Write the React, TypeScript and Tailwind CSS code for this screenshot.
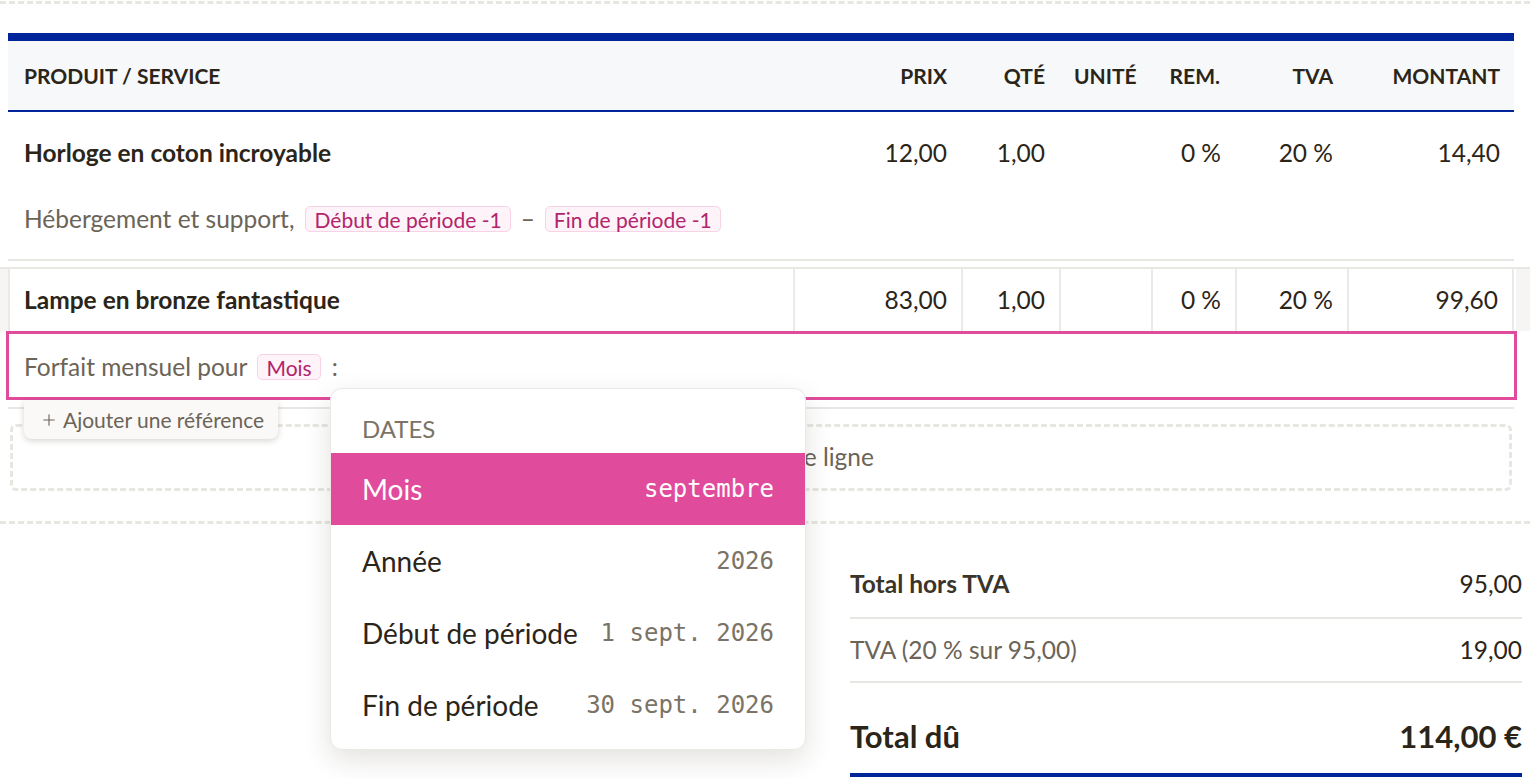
import { Plus } from "lucide-react";

interface Line {
    name: string;
    price: string;
    qty: string;
    unit: string;
    discount: string;
    vat: string;
    amount: string;
}

const lines: Line[] = [
    { name: "Horloge en coton incroyable", price: "12,00", qty: "1,00", unit: "", discount: "0 %", vat: "20 %", amount: "14,40" },
    { name: "Lampe en bronze fantastique", price: "83,00", qty: "1,00", unit: "", discount: "0 %", vat: "20 %", amount: "99,60" },
];

const dateOptions = [
    { label: "Mois", value: "septembre" },
    { label: "Année", value: "2026" },
    { label: "Début de période", value: "1 sept. 2026" },
    { label: "Fin de période", value: "30 sept. 2026" },
];

const cols = "grid grid-cols-[785px_168px_98px_92px_84px_112px_167px]";

function Tag({ children }: { children: React.ReactNode }) {
    return (
        <span className="inline-flex items-center h-[26px] px-[8px] rounded-[5px] border-[1.5px] border-[#f8d2e5] bg-[#fdf3f8] text-[#b2246c] text-[21px] leading-none">
            {children}
        </span>
    );
}

function DashedRule() {
    return <div className="w-full border-t-[3px] border-dashed border-[#e8e6e1]" />;
}

function DatesMenu() {
    return (
        <div className="absolute z-30 left-[330px] top-[388px] w-[476px] bg-white rounded-xl border border-[#ebe9e6] shadow-[0_10px_28px_rgba(40,30,10,0.13)] pb-2 overflow-hidden">
            <div className="h-[64px] flex items-end pb-2 px-[31px] text-[24px] leading-8 text-[#7b7366] uppercase">
                Dates
            </div>
            {dateOptions.map((opt, i) => (
                <div
                    key={opt.label}
                    className={
                        i === 0
                            ? "h-[72px] flex items-center justify-between px-[31px] bg-[#e04c9b] text-white"
                            : "h-[72px] flex items-center justify-between px-[31px] text-[#2b2519]"
                    }
                >
                    <span className="text-[28px]">{opt.label}</span>
                    <span
                        className={
                            i === 0
                                ? "font-['DejaVu_Sans_Mono',monospace] text-[24px]"
                                : "font-['DejaVu_Sans_Mono',monospace] text-[24px] text-[#7b7366]"
                        }
                    >
                        {opt.value}
                    </span>
                </div>
            ))}
        </div>
    );
}

function Cells({ line, bordered }: { line: Line; bordered?: boolean }) {
    const edge = bordered ? " border-l-2 border-[#ebeae8]" : "";
    return (
        <>
            <div className={(bordered ? "px-[14px]" : "px-4") + " font-bold text-[#2b2519]" + edge}>{line.name}</div>
            <div className={"px-[14px] text-right" + edge}>{line.price}</div>
            <div className={"px-[14px] text-right" + edge}>{line.qty}</div>
            <div className={"px-[14px]" + edge}>{line.unit}</div>
            <div className={"px-[14px] text-right" + edge}>{line.discount}</div>
            <div className={"px-[14px] text-right" + edge}>{line.vat}</div>
            <div className={"px-[14px] text-right" + edge + (bordered ? " border-r-2" : "")}>{line.amount}</div>
        </>
    );
}

export default function App() {
    return (
        <div className="relative w-[1530px] h-[778px] overflow-hidden bg-white font-['Lato',sans-serif] text-[24.5px] text-[#2b2519]">
            <div className="pt-px">
                <DashedRule />
            </div>

            {/* invoice lines */}
            <div className="pl-2 pr-4 mt-[29px]">
                <div className={cols + " h-[79px] items-center border-t-8 border-b-2 border-[#00259b] bg-[#f7f8fa] text-[21px] font-bold uppercase"}>
                    <div className="px-4">Produit / Service</div>
                    <div className="px-[14px] text-right">Prix</div>
                    <div className="px-[14px] text-right">Qté</div>
                    <div className="px-[15px]">Unité</div>
                    <div className="px-[15px] text-right">Rem.</div>
                    <div className="px-[14px] text-right">TVA</div>
                    <div className="px-[14px] text-right">Montant</div>
                </div>

                <div className="border-b-2 border-[#e8e6e2] pb-[15px]">
                    <div className={cols + " h-[82px] items-center"}>
                        <Cells line={lines[0]} />
                    </div>
                    <div className="h-[50px] flex items-center px-4 text-[#6b6457]">
                        <span>Hébergement et support,</span>
                        <span className="ml-[11px]">
                            <Tag>Début de période -1</Tag>
                        </span>
                        <span className="mx-[10px]">–</span>
                        <Tag>Fin de période -1</Tag>
                    </div>
                </div>
            </div>

            <div className="mt-[6px] border-t-2 border-[#e9e7e3] bg-[#f6f5f3] pl-2 pr-[14px]">
                <div className={cols + " h-[62px] items-center bg-white [&>div]:h-full [&>div]:flex [&>div]:items-center [&>div]:justify-end [&>div:first-child]:justify-start"}>
                    <Cells line={lines[1]} bordered />
                </div>
            </div>

            <div className="relative pl-2 pr-4">
                <div className="relative z-10 -ml-[2px] -mr-[3px] h-[69px] pt-[3px] border-[3px] border-[#e04c9b] bg-white flex items-center px-[15px] text-[#6b6457]">
                    <span>Forfait mensuel pour</span>
                    <span className="ml-[10px] mr-[11px]">
                        <Tag>Mois</Tag>
                    </span>
                    <span>:</span>
                </div>
                <div className="mt-[7px] border-t-2 border-[#e8e6e2]" />

                <button className="absolute z-20 left-[24px] top-[69px] w-[254px] h-[39px] pl-4 flex items-center gap-[5px] rounded-b-lg bg-[#faf9f7] shadow-[0_2px_6px_rgba(40,30,10,0.18)] text-[21px] text-[#6b6457]">
                    <Plus size={18} strokeWidth={1.5} />
                    Ajouter une référence
                </button>

                <div className="mx-[2px] mt-[15px] h-[67px] rounded-md border-[3px] border-dashed border-[#e8e6e1] flex items-center justify-center gap-2 pl-[12px] text-[#6b6457]">
                    <Plus size={22} strokeWidth={1.5} />
                    Ajouter une ligne
                </div>
            </div>

            <div className="mt-[30px]">
                <DashedRule />
            </div>

            {/* totals */}
            <div className="flex justify-end pr-2 mt-[27px]">
                <div className="w-[672px]">
                    <div className="h-[68px] flex items-center justify-between border-b-2 border-[#e8e6e2]">
                        <span className="font-bold text-[#3b3428]">Total hors TVA</span>
                        <span>95,00</span>
                    </div>
                    <div className="h-[64px] flex items-center justify-between border-b-2 border-[#e8e6e2] text-[#6b6457]">
                        <span>TVA (20 % sur 95,00)</span>
                        <span className="text-[#2b2519]">19,00</span>
                    </div>
                    <div className="h-[94px] pt-[33px] flex justify-between border-b-4 border-[#00259b] text-[31px] leading-10 font-bold">
                        <span>Total dû</span>
                        <span>114,00 €</span>
                    </div>
                </div>
            </div>

            <DatesMenu />
        </div>
    );
}
